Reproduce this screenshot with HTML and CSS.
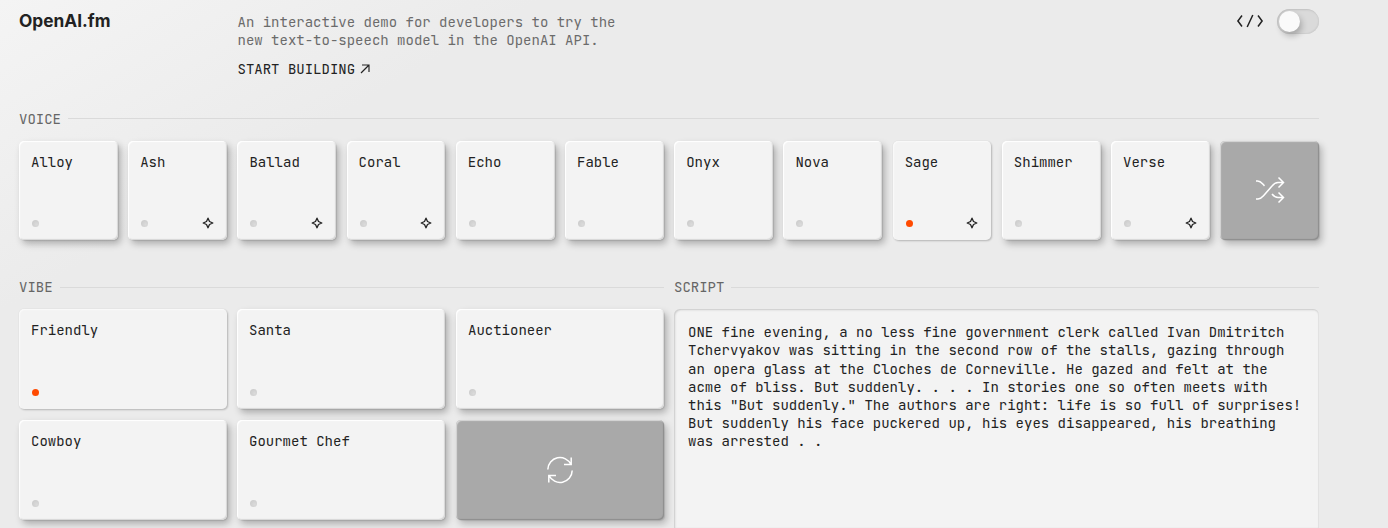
FILE: index.html
```
<!DOCTYPE html>
<html lang="en">
<head>
<meta charset="utf-8">
<title>OpenAI.fm</title>
<link rel="stylesheet" href="styles.css">
</head>
<body>
<svg class="defs" aria-hidden="true">
  <symbol id="spark" viewBox="0 0 12 12"><path d="M6 1.200 7.500 4.500 10.800 6 7.500 7.500 6 10.800 4.500 7.500 1.200 6 4.500 4.500Z" fill="none" stroke="#222" stroke-width="1.300" stroke-linejoin="round"/></symbol>
</svg>
<div class="page">
  <header class="header">
    <div class="logo">OpenAI.fm</div>
    <div class="intro">
      <p>An interactive demo for developers to try the<br>new text-to-speech model in the OpenAI API.</p>
      <a class="start">START BUILDING<svg width="10" height="10" viewBox="0 0 10 10"><path d="M1 9 9 1M2 1H9V8" fill="none" stroke="#222" stroke-width="1.15"/></svg></a>
    </div>
    <div class="tools">
      <svg class="code" width="28" height="14" viewBox="0 0 28 14"><path d="M6 1.500 1.900 7 6 12.500M16.800 1 11.200 13M22 1.500 26.100 7 22 12.500" fill="none" stroke="#222" stroke-width="1.500"/></svg>
      <div class="toggle"><span class="knob"></span></div>
    </div>
  </header>

  <section class="voice">
    <h2 class="heading">VOICE</h2>
    <div class="voices">
      <div class="card"><span>Alloy</span><i class="dot"></i></div>
      <div class="card"><span>Ash</span><i class="dot"></i><svg class="spark"><use href="#spark"/></svg></div>
      <div class="card"><span>Ballad</span><i class="dot"></i><svg class="spark"><use href="#spark"/></svg></div>
      <div class="card"><span>Coral</span><i class="dot"></i><svg class="spark"><use href="#spark"/></svg></div>
      <div class="card"><span>Echo</span><i class="dot"></i></div>
      <div class="card"><span>Fable</span><i class="dot"></i></div>
      <div class="card"><span>Onyx</span><i class="dot"></i></div>
      <div class="card"><span>Nova</span><i class="dot"></i></div>
      <div class="card selected"><span>Sage</span><i class="dot"></i><svg class="spark"><use href="#spark"/></svg></div>
      <div class="card"><span>Shimmer</span><i class="dot"></i></div>
      <div class="card"><span>Verse</span><i class="dot"></i><svg class="spark"><use href="#spark"/></svg></div>
      <div class="card action"><svg class="shuffle" width="30" height="28" viewBox="0 0 30 28"><path d="M1 5H2.500C6 5 7 7.500 9.500 9.900M1 23H3C6 23 7 21.500 8.500 19.700L17 10C19 7.500 20.500 6.500 23 6.500H28.500M17 18C19 20.500 20.500 21.500 23 21.500H28.500M23.500 1.500 28.500 6.500 23.500 11.500M23.500 16.500 28.500 21.500 23.500 26.500" fill="none" stroke="#fff" stroke-width="1.500"/></svg></div>
    </div>
  </section>

  <div class="lower">
    <section>
      <h2 class="heading">VIBE</h2>
      <div class="vibes">
        <div class="card selected"><span>Friendly</span><i class="dot"></i></div>
        <div class="card"><span>Santa</span><i class="dot"></i></div>
        <div class="card"><span>Auctioneer</span><i class="dot"></i></div>
        <div class="card"><span>Cowboy</span><i class="dot"></i></div>
        <div class="card"><span>Gourmet Chef</span><i class="dot"></i></div>
        <div class="card action"><svg width="28" height="28" viewBox="0 0 28 28"><path d="M1.800 13.500A12.200 12.200 0 0 1 25 8.500M26.200 14.500A12.200 12.200 0 0 1 3 19.500M25.200 1.500V8.500H18M2.800 26.500V19.500H10" fill="none" stroke="#fff" stroke-width="1.500"/></svg></div>
      </div>
    </section>
    <section>
      <h2 class="heading">SCRIPT</h2>
      <div class="script">ONE fine evening, a no less fine government clerk called Ivan Dmitritch<br>Tchervyakov was sitting in the second row of the stalls, gazing through<br>an opera glass at the Cloches de Corneville. He gazed and felt at the<br>acme of bliss. But suddenly. . . . In stories one so often meets with<br>this "But suddenly." The authors are right: life is so full of surprises!<br>But suddenly his face puckered up, his eyes disappeared, his breathing<br>was arrested . .</div>
    </section>
  </div>
</div>
</body>
</html>
```
FILE: styles.css
```
* { box-sizing: border-box; }
html { height: 100%; overflow: hidden; }
body {
  margin: 0;
  height: 100%;
  overflow: hidden;
  background: linear-gradient(150deg, #f4f4f4 0, #ebebeb 270px);
  color: #222;
  font: 14px/18.2px "JetBrains Mono", "DejaVu Sans Mono", monospace;
}
.defs { display: none; }
.page { width: 1319px; padding: 9px 0 0 19px; }
.header {
  display: grid;
  grid-template-columns: 218.5px 1fr auto;
  height: 101px;
}
.logo {
  font: 700 17.3px/24px Inter, sans-serif;
  white-space: nowrap;
}
.intro { padding-top: 4px; }
.intro p { margin: 0 0 11px; color: #6b6b6b; }
.start { display: flex; align-items: center; gap: 5px; }
.start svg { margin-bottom: 1px; }
.tools { display: flex; align-items: center; gap: 13px; height: 25px; }
.code { margin-bottom: 1px; }
.toggle {
  width: 42px;
  height: 25px;
  padding: 2px;
  border-radius: 13px;
  background: #dadada;
  box-shadow: inset 1px 1px 2px #bfbfbf, inset -1px -1px 1px #d0d0d0;
}
.knob {
  display: block;
  width: 21px;
  height: 21px;
  border-radius: 50%;
  background: #fafafa;
  box-shadow: 2px 4px 6px rgba(0, 0, 0, .24);
}
.heading {
  display: flex;
  align-items: center;
  gap: 7px;
  margin: 0 0 13px;
  height: 18px;
  color: #666;
  font: inherit;
}
.heading::after { content: ""; flex: 1; height: 1px; background: #dadada; }
.voice { height: 168px; }
.voice .heading::after { margin-bottom: 1px; }
.voices { display: grid; grid-template-columns: repeat(12, 98.700px); justify-content: space-between; }
.voices .card { height: 99px; }
.lower { display: grid; grid-template-columns: 645px 645px; gap: 10px; }
.vibes { display: grid; grid-template-columns: 208px 207px 208px; gap: 11px; }
.vibes .card { height: 100px; }
.vibes .card:nth-child(3n + 2) { margin: 0 1px 0 -1px; width: 208px; }
.card {
  display: grid;
  grid-template-columns: 1fr auto;
  align-content: space-between;
  align-items: center;
  padding: 12px 13px 11px 12px;
  border-radius: 5px;
  background: #f3f3f3;
  box-shadow: inset 1px 1px 1px #fff, inset -1px -1px 1px #d6d6d6,
    1px 1px 1px rgba(0, 0, 0, .1), 3px 4px 7px rgba(0, 0, 0, .26);
}
.card > span { grid-column: 1 / -1; }
.dot {
  width: 7px;
  height: 7px;
  margin: 3px 0 2px 1px;
  border-radius: 50%;
  background: radial-gradient(circle at 65% 65%, #dadada, #c8c8c8);
}
.spark { width: 12px; height: 12px; }
.selected {
  box-shadow: inset 1px 1px 1px #fafafa, 0 0 1px #c9c9c9, 1px 1px 2px rgba(0, 0, 0, .24);
}
.selected .dot { background: #ff4a00; }
.action {
  display: flex;
  align-items: center;
  justify-content: center;
  padding: 0;
  background: #a9a9a9;
  box-shadow: inset 1px 1px 1px #d8d8d8, inset -1px -1px 1px #8d8d8d,
    1px 1px 1px rgba(0, 0, 0, .1), 3px 4px 7px rgba(0, 0, 0, .23);
}
.shuffle { margin-bottom: 2px; }
.script {
  height: 219px;
  padding: 14.150px 14px 0;
  border-radius: 6px 6px 0 0;
  background: #f3f3f3;
  box-shadow: inset 1px 1px 2px #c8c8c8, inset -1px 0 1px #e3e3e3;
  white-space: nowrap;
}
```
